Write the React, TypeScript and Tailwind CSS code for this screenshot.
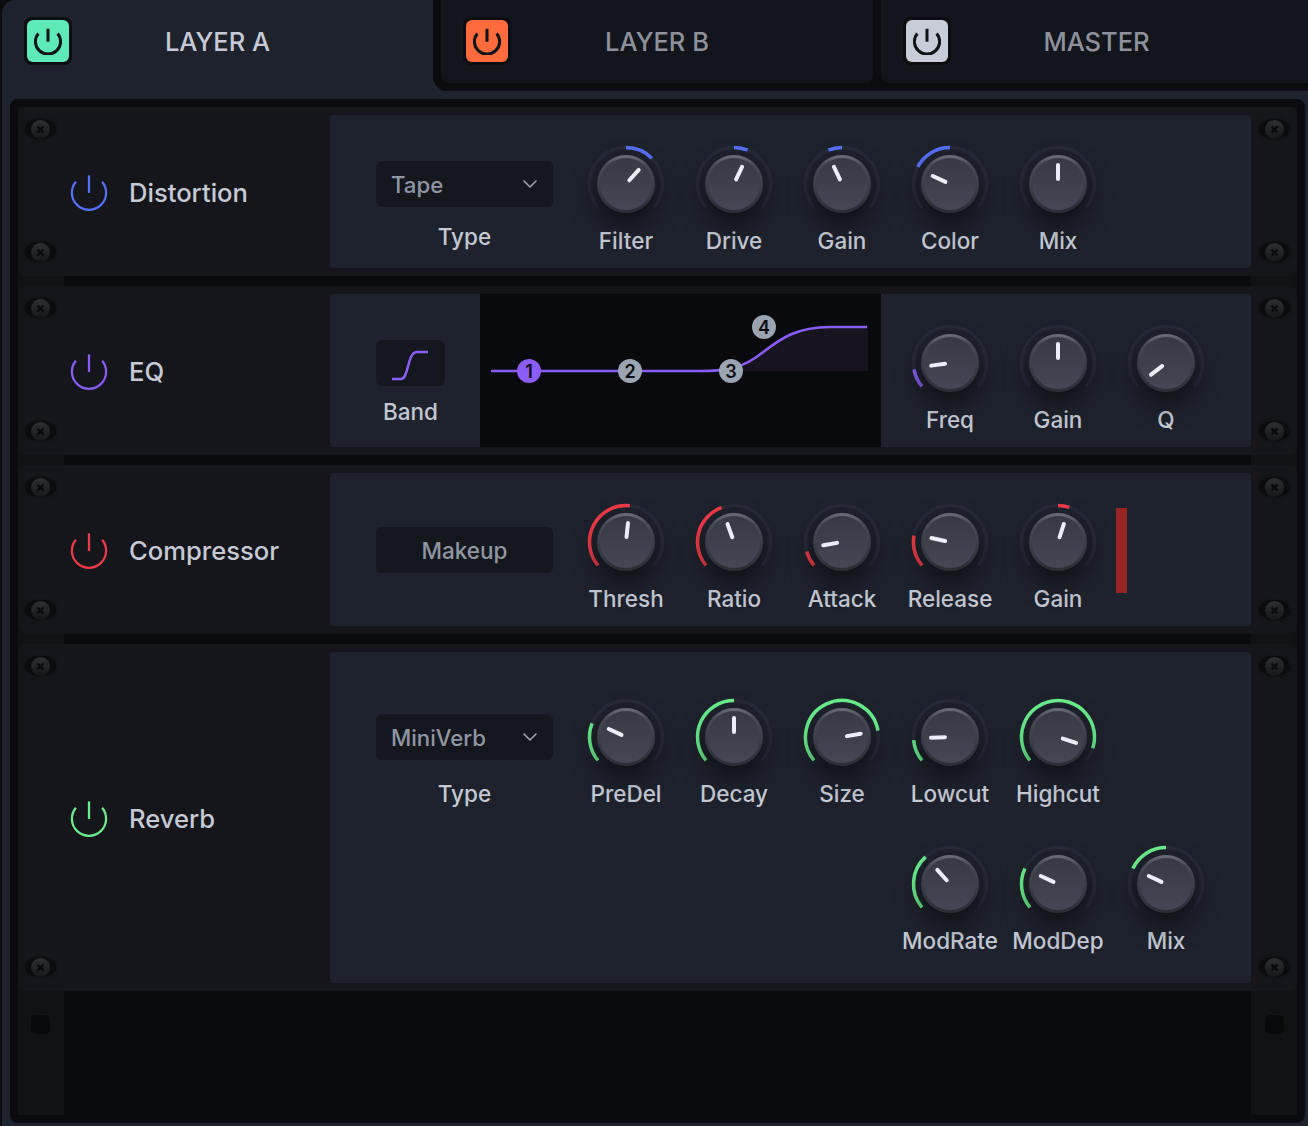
import { ChevronDown } from 'lucide-react';

const BLUE = '#5470f5';
const PURPLE = '#8b5cf6';
const RED = '#ef3a48';
const GREEN = '#6aee8c';

interface KnobProps {
    label: string;
    angle: number;
    from?: number;
    to?: number;
    color?: string;
}

// angle 0 is straight up, the sweep runs -130..130
function polar(deg: number, r: number) {
    const rad = (deg * Math.PI) / 180;
    return `${(40 + r * Math.sin(rad)).toFixed(2)} ${(40 - r * Math.cos(rad)).toFixed(2)}`;
}

function arc(a: number, b: number, r: number) {
    const start = Math.min(a, b);
    const end = Math.max(a, b);
    const large = end - start > 180 ? 1 : 0;
    return `M${polar(start, r)} A${r} ${r} 0 ${large} 1 ${polar(end, r)}`;
}

function Knob({ label, angle, from, to, color }: KnobProps) {
    return (
        <div className="flex w-[108px] shrink-0 flex-col items-center">
            <div className="relative h-20 w-20">
                <svg width="80" height="80" viewBox="0 0 80 80" className="absolute inset-0">
                    <path d={arc(-130, 130, 36.5)} fill="none" stroke="#272b37" strokeWidth="3.5" />
                    {color && from !== undefined && to !== undefined && (
                        <path d={arc(from, to, 36.5)} fill="none" stroke={color} strokeWidth="3.5" />
                    )}
                </svg>
                <div className="absolute left-[11px] top-[11px] h-[58px] w-[58px] rounded-full bg-[linear-gradient(180deg,#6c6e7a_0%,#474954_18%,#2b2d35_100%)] p-[3px] shadow-[0_12px_24px_rgba(0,0,0,0.55)]">
                    <div className="h-full w-full rounded-full bg-[linear-gradient(180deg,#373944_0%,#454754_100%)]" />
                </div>
                <div className="absolute left-[11px] top-[11px] h-[58px] w-[58px]" style={{ transform: `rotate(${angle}deg)` }}>
                    <div className="mx-auto mt-[8px] h-[18px] w-[3.5px] rounded-full bg-[#eceef8]" />
                </div>
            </div>
            <div className="mt-[5px] h-6 whitespace-nowrap text-[22.5px] font-medium leading-6 text-[#c3c8d2]">{label}</div>
        </div>
    );
}

function PowerIcon({ size, color, width }: { size: number; color: string; width: number }) {
    return (
        <svg width={size} height={size} viewBox="0 0 40 40" fill="none" stroke={color} strokeWidth={width}>
            <path d="M6.2 9.2 A18 18 0 1 0 33.8 9.2" />
            <path d="M20 2.5 V21" />
        </svg>
    );
}

function TabButton({ label, bg, active, tabClass }: { label: string; bg: string; active?: boolean; tabClass: string }) {
    return (
        <div className={`grid h-full grid-cols-[1fr_auto_1fr] ${tabClass}`}>
            <div className="flex items-start pl-[22px] pt-[17px]">
                <div className="h-12 w-12 rounded-lg bg-[#0b0d11] p-[3px]">
                    <div className="flex h-[42px] w-[42px] items-center justify-center rounded-md" style={{ background: bg }}>
                        <PowerIcon size={28} color="#0d1416" width={4.3} />
                    </div>
                </div>
            </div>
            <div className={`mt-[25px] text-[25.5px] font-medium leading-[34px] ${active ? 'text-[#c6cad4]' : 'text-[#8d919b]'}`}>{label}</div>
            <div />
        </div>
    );
}

function Screw() {
    return (
        <div className="relative flex h-5 w-[31px] items-center justify-center rounded-[50%] bg-[#0b0c0f] shadow-[0_0_3px_#0b0c0f]">
            <div className="flex h-[19px] w-[19px] items-center justify-center rounded-full bg-[linear-gradient(180deg,#2f3036_0%,#15161a_100%)] blur-[0.4px]">
                <svg width="9" height="9" viewBox="0 0 9 9" stroke="#0a0b0d" strokeWidth="2.4">
                    <path d="M1.5 1.5 L7.5 7.5 M7.5 1.5 L1.5 7.5" />
                </svg>
            </div>
        </div>
    );
}

function Rail() {
    return (
        <div className="flex w-[46px] shrink-0 flex-col items-center justify-between pb-[14px] pl-[1px] pr-[2px] pt-3">
            <Screw />
            <Screw />
        </div>
    );
}

function RightRail() {
    return (
        <div className="flex w-[46px] shrink-0 flex-col items-center justify-between pb-[14px] pt-3">
            <Screw />
            <Screw />
        </div>
    );
}

function Row({ name, color, children, tall }: { name: string; color: string; children: React.ReactNode; tall?: boolean }) {
    return (
        <div className={`relative flex rounded-lg bg-[#14161c] ${tall ? 'h-[347px]' : 'h-[169px]'}`}>
            <Rail />
            <div className="flex w-[266px] shrink-0 items-center gap-[21px] pl-[6px]">
                <PowerIcon size={38} color={color} width={2.4} />
                <span className="mt-[3px] text-[25.6px] font-medium leading-8 text-[#c6cad4]">{name}</span>
            </div>
            <div className="my-2 flex min-w-0 flex-1 overflow-hidden rounded bg-[#1e222c]">{children}</div>
            <RightRail />
        </div>
    );
}

function Select({ value, top, labelGap }: { value: string; top: string; labelGap: string }) {
    return (
        <div className={`w-[177px] shrink-0 ${top}`}>
            <div className="flex h-[46px] items-center justify-between rounded-md bg-[#14171e] pl-[15px] pr-[11px] text-[22.2px] font-medium text-[#9096a1]">
                <span className="pt-[1px]">{value}</span>
                <ChevronDown size={24} strokeWidth={1.5} color="#a2a7b1" />
            </div>
            <div className={`${labelGap} text-center text-[22.5px] font-medium leading-6 text-[#c3c8d2]`}>Type</div>
        </div>
    );
}

function EqDisplay() {
    const nodes = [
        { n: '1', x: 49, y: 77, fill: PURPLE },
        { n: '2', x: 150, y: 77, fill: '#9aa5b1' },
        { n: '3', x: 251, y: 77, fill: '#9aa5b1' },
        { n: '4', x: 284, y: 33, fill: '#9aa5b1' },
    ];
    return (
        <div className="w-[401px] shrink-0 bg-[#090a0d]">
            <svg width="401" height="154" viewBox="0 0 401 154">
                <path d="M255 77 C262 75 268 69 275 64 C295 50 310 33 350 33 H388 V77 Z" fill="#17131f" />
                <path d="M11 77 H220 C245 77 258 75 275 64 C295 50 310 33 350 33 H387" fill="none" stroke={PURPLE} strokeWidth="2.6" />
                {nodes.map((node) => (
                    <g key={node.n}>
                        <circle cx={node.x} cy={node.y} r="12" fill={node.fill} />
                        <text x={node.x} y={node.y + 6.5} textAnchor="middle" fontSize="18" fontWeight="600" fill="#0c0e12">
                            {node.n}
                        </text>
                    </g>
                ))}
            </svg>
        </div>
    );
}

export default function App() {
    return (
        <div className="h-[1126px] w-full overflow-hidden bg-[#0c0d11] pl-[2px] font-['Inter',sans-serif]">
            <div className="flex h-full flex-col rounded-t-[14px] bg-[#1e232d] pb-[3px] pr-[3px]">
                {/* Tabs */}
                <div className="flex h-[99px] shrink-0">
                    <TabButton label="LAYER A" bg="#5eeab8" active tabClass="w-[431px] shrink-0 bg-[#1e222c] rounded-t-[14px]" />
                    <div className="-mr-[3px] flex h-[91px] flex-1 gap-2 overflow-hidden rounded-bl-[14px] bg-[#0b0c10] pb-2 pl-2">
                        <TabButton label="LAYER B" bg="#ff6b3d" tabClass="w-[432px] shrink-0 rounded-b-lg bg-[#12151c]" />
                        <TabButton label="MASTER" bg="#c8ccd6" tabClass="w-[431px] shrink-0 rounded-bl-lg bg-[#12151c]" />
                    </div>
                </div>

                {/* Rack */}
                <div className="relative ml-2 flex min-h-0 flex-1 flex-col gap-[10px] rounded-lg bg-[#0a0b0e] p-2">
                    <div className="absolute bottom-2 left-2 top-2 w-[46px] bg-[#101216]" />
                    <div className="absolute bottom-2 right-2 top-2 w-[46px] bg-[#101216]" />

                    <Row name="Distortion" color={BLUE}>
                        <div className="flex gap-[19px] pl-[46px]">
                            <Select value="Tape" top="pt-[46px]" labelGap="mt-[18px]" />
                            <div className="flex pt-[29px]">
                                <Knob label="Filter" angle={42} from={0} to={45} color={BLUE} />
                                <Knob label="Drive" angle={25} from={0} to={22} color={BLUE} />
                                <Knob label="Gain" angle={-25} from={-22} to={0} color={BLUE} />
                                <Knob label="Color" angle={-65} from={-62} to={0} color={BLUE} />
                                <Knob label="Mix" angle={0} />
                            </div>
                        </div>
                    </Row>

                    <Row name="EQ" color={PURPLE}>
                        <div className="w-[150px] shrink-0 pl-[46px] pt-[46px]">
                            <div className="h-[46px] w-[69px] rounded-md bg-[#14171e]">
                                <svg width="69" height="46" viewBox="0 0 69 46" fill="none" stroke={PURPLE} strokeWidth="2.4">
                                    <path d="M16 39 H25 C33 39 31 12 41 12 H52" />
                                </svg>
                            </div>
                            <div className="mt-[14px] w-[69px] text-center text-[22.5px] font-medium leading-6 text-[#c3c8d2]">Band</div>
                        </div>
                        <EqDisplay />
                        <div className="flex pl-[15px] pt-[29px]">
                            <Knob label="Freq" angle={-98} from={-130} to={-100} color={PURPLE} />
                            <Knob label="Gain" angle={0} />
                            <Knob label="Q" angle={-128} />
                        </div>
                    </Row>

                    <Row name="Compressor" color={RED}>
                        <div className="flex gap-[19px] pl-[46px]">
                            <div className="w-[177px] shrink-0 pt-[54px]">
                                <div className="flex h-[46px] items-center justify-center rounded-md bg-[#14171e] pt-[1px] text-[22.5px] font-medium text-[#9096a1]">Makeup</div>
                            </div>
                            <div className="flex items-start pt-[29px]">
                                <Knob label="Thresh" angle={6} from={-130} to={6} color={RED} />
                                <Knob label="Ratio" angle={-20} from={-130} to={-20} color={RED} />
                                <Knob label="Attack" angle={-100} from={-130} to={-105} color={RED} />
                                <Knob label="Release" angle={-78} from={-130} to={-80} color={RED} />
                                <Knob label="Gain" angle={18} from={0} to={18} color={RED} />
                                <div className="ml-[4px] mt-[6px] h-[85px] w-[11px] bg-[#982525]" />
                            </div>
                        </div>
                    </Row>

                    <Row name="Reverb" color={GREEN} tall>
                        <div className="flex gap-[19px] pl-[46px]">
                            <Select value="MiniVerb" top="pt-[62px]" labelGap="mt-[22px]" />
                            <div className="flex w-[648px] flex-col gap-[38px] pt-[45px]">
                                <div className="flex">
                                    <Knob label="PreDel" angle={-65} from={-130} to={-68} color={GREEN} />
                                    <Knob label="Decay" angle={0} from={-130} to={0} color={GREEN} />
                                    <Knob label="Size" angle={80} from={-130} to={80} color={GREEN} />
                                    <Knob label="Lowcut" angle={-92} from={-130} to={-95} color={GREEN} />
                                    <Knob label="Highcut" angle={108} from={-130} to={108} color={GREEN} />
                                </div>
                                <div className="flex justify-end">
                                    <Knob label="ModRate" angle={-42} from={-130} to={-42} color={GREEN} />
                                    <Knob label="ModDep" angle={-65} from={-130} to={-65} color={GREEN} />
                                    <Knob label="Mix" angle={-65} from={-65} to={0} color={GREEN} />
                                </div>
                            </div>
                        </div>
                    </Row>

                    <div className="relative flex flex-1 justify-between pt-[14px]">
                        <div className="flex w-[46px] justify-center pr-[1px]">
                            <div className="h-[19px] w-[19px] rounded-[5px] bg-[#08090b]" />
                        </div>
                        <div className="flex w-[46px] justify-center">
                            <div className="h-[19px] w-[19px] rounded-[5px] bg-[#08090b]" />
                        </div>
                    </div>
                </div>
            </div>
        </div>
    );
}
